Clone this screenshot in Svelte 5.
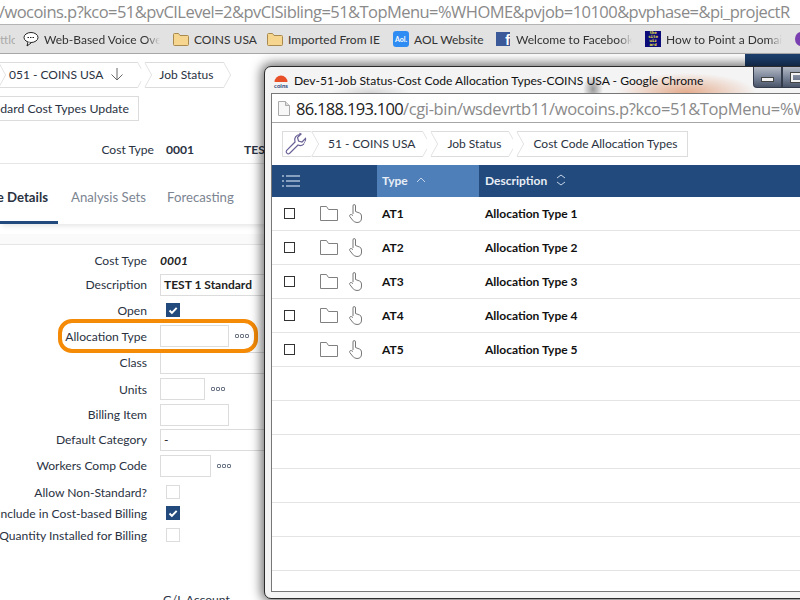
<script>
  const bookmarks = [
    { label: 'Web-Based Voice Over', icon: 'bubble', width: 116, fade: true },
    { label: 'COINS USA', icon: 'folder', width: 60 },
    { label: 'Imported From IE', icon: 'folder', width: 92 },
    { label: 'AOL Website', icon: 'aol', width: 68 },
    { label: 'Welcome to Facebook', icon: 'fb', width: 116, fade: true },
    { label: 'How to Point a Domain', icon: 'wiz', width: 116, fade: true },
  ]
  const rows = [1, 2, 3, 4, 5]
  const emptyRows = [1, 2, 3, 4, 5, 6]
</script>

{#snippet dots()}
  <span class="dots"><i></i><i></i><i></i></span>
{/snippet}

{#snippet check()}
  <span class="check">
    <svg width="14" height="14" viewBox="0 0 14 14"><path d="M3.5 7.5l2.4 2.4 4.8-5" fill="none" stroke="#fff" stroke-width="2"/></svg>
  </span>
{/snippet}

<div class="screen">
  <div class="urlbar">/wocoins.p?kco=51&amp;pvCILevel=2&amp;pvCISibling=51&amp;TopMenu=%WHOME&amp;pvjob=10100&amp;pvphase=&amp;pi_projectR</div>

  <div class="bookmarks">
    <span class="bm-cut">ttlc</span>
    {#each bookmarks as b}
      <div class="bm">
        {#if b.icon === 'bubble'}
          <svg width="16" height="16" viewBox="0 0 16 16"><ellipse cx="8" cy="6.5" rx="7" ry="5" fill="#fff" stroke="#222"/><path d="M5 11l-1 4 4-3" fill="#fff" stroke="#222"/><path d="M4.5 6.5h7" stroke="#222" stroke-dasharray="1.5 1"/></svg>
        {:else if b.icon === 'folder'}
          <svg width="16" height="16" viewBox="0 0 16 16"><path d="M.5 3.5q0-1 1-1h4l1.5 2h7.500q1 0 1 1v8q0 1-1 1h-13q-1 0-1-1z" fill="#f6d68e" stroke="#a98a4e"/></svg>
        {:else if b.icon === 'aol'}
          <span class="aol">Aol.</span>
        {:else if b.icon === 'fb'}
          <span class="fb">f</span>
        {:else}
          <span class="wiz">the site wiz ard</span>
        {/if}
        <span class="bm-label" class:fade={b.fade} style="width: {b.width}px">{b.label}</span>
      </div>
    {/each}
    <span class="bm-purple"></span>
  </div>

  <main class="page">
    <div class="page-top">
      <nav class="crumbs">
        <div class="crumb first">051 - COINS USA
          <svg class="down" width="14" height="14" viewBox="0 0 14 14"><path d="M7 1v12M1.500 7.500L7 13l5.500-5.500" fill="none" stroke="#666"/></svg>
        </div>
        <div class="crumb second">Job Status</div>
      </nav>
      <div class="navy"></div>
    </div>

    <div class="toolbar"><button class="update"><span>Standard Cost Types Update</span></button></div>

    <div class="summary">
      <span class="s-label">Cost Type</span>
      <b class="s-code">0001</b>
      <b class="s-name">TEST 1 Standard</b>
    </div>

    <div class="tabs">
      <div class="tab active"><span>Cost Type Details</span></div>
      <div class="tab">Analysis Sets</div>
      <div class="tab">Forecasting</div>
    </div>
    <div class="band"></div>

    <div class="form">
      <label>Cost Type</label><div class="value"><em>0001</em></div>
      <label>Description</label><div class="value"><span class="input wide bold">TEST 1 Standard</span></div>
      <label>Open</label><div class="value">{@render check()}</div>
      <label>Allocation Type</label><div class="value"><span class="input w69"></span>{@render dots()}</div>
      <label>Class</label><div class="value"><span class="input wide"></span></div>
      <label>Units</label><div class="value"><span class="input w45"></span>{@render dots()}</div>
      <label>Billing Item</label><div class="value"><span class="input w69"></span></div>
      <label>Default Category</label><div class="value"><span class="input wide">-</span></div>
      <label>Workers Comp Code</label><div class="value"><span class="input w51"></span>{@render dots()}</div>
      <label>Allow Non-Standard?</label><div class="value"><span class="box"></span></div>
      <label>Include in Cost-based Billing</label><div class="value">{@render check()}</div>
      <label>Quantity Installed for Billing</label><div class="value"><span class="box"></span></div>
    </div>
    <div class="gl">G/L Account</div>
  </main>

  <div class="callout"></div>

  <section class="popup">
    <div class="titlebar">
      <svg class="coins" width="18" height="18" viewBox="0 0 18 18">
        <path d="M2.500 11a6.500 6.500 0 0 1 13 0z" fill="#e8502a"/>
        <text x="9" y="16.500" font-size="6" font-weight="700" fill="#1f3f77" text-anchor="middle" font-family="Lato">coins</text>
      </svg>
      <span class="wintitle">Dev-51-Job Status-Cost Code Allocation Types-COINS USA - Google Chrome</span>
      <div class="winbtns">
        <div class="winbtn"><i class="min"></i></div>
        <div class="winbtn"><i class="max"></i></div>
      </div>
    </div>
    <div class="popup-inner">
      <div class="popup-url">
        <svg width="12" height="15" viewBox="0 0 12 15"><path d="M.5.500h7l4 4v10H.5z" fill="#f7f7f7" stroke="#aaa"/><path d="M7.500.500v4h4" fill="#ddd" stroke="#aaa"/></svg>
        <span class="host">86.188.193.100</span><span class="path">/cgi-bin/wsdevrtb11/wocoins.p?kco=51&amp;TopMenu=%WHOME</span>
      </div>
      <div class="popup-crumbs">
        <div class="crumb tool">
          <svg width="24" height="24" viewBox="0 0 24 24"><path d="M16 2.500a5.500 5.500 0 0 0-5 7.500L2.500 18.500a2.200 2.200 0 0 0 3 3L14 13a5.500 5.500 0 0 0 7.500-6.500l-3.500 3.500-3.500-1-1-3.500 3.500-3.500a5 5 0 0 0-1-.5z" fill="none" stroke="#6a6196" stroke-width="1.200"/></svg>
        </div>
        <div class="crumb coins-crumb">51 - COINS USA</div>
        <div class="crumb">Job Status</div>
        <div class="crumb last">Cost Code Allocation Types</div>
      </div>
      <div class="thead">
        <div class="c-menu">
          <svg width="18" height="12" viewBox="0 0 18 12"><path d="M4 1h14M4 6h14M4 11h14M0 1h2M0 6h2M0 11h2" stroke="#a9bdd6" stroke-width="1.300"/></svg>
        </div>
        <div class="c-type">Type
          <svg width="10" height="6" viewBox="0 0 10 6"><path d="M1 5l4-4 4 4" fill="none" stroke="#c6d6ea"/></svg>
        </div>
        <div class="c-desc">Description
          <svg width="10" height="12" viewBox="0 0 10 12"><path d="M1 4l4-3 4 3M1 8l4 3 4-3" fill="none" stroke="#c6d6ea"/></svg>
        </div>
      </div>
      {#each rows as n}
        <div class="trow">
          <span class="tick"></span>
          <svg class="ico-folder" width="18" height="15" viewBox="0 0 18 15"><path d="M.5 14.500V.5h6l2 3h9v11z" fill="#fff" stroke="#808080"/></svg>
          <svg class="ico-hand" width="13" height="19" viewBox="0 0 13 19"><path d="M4 10V2q0-1.500 1.200-1.500T6.500 2v5.500l4 1.500q2 .8 2 3v2q0 4.500-4.500 4.500-3 0-4.500-2.500L.8 12.500q-.6-1.200.4-1.800T4 11.500" fill="none" stroke="#777"/></svg>
          <b class="t-code">AT{n}</b>
          <b class="t-desc">Allocation Type {n}</b>
        </div>
      {/each}
      {#each emptyRows as n}
        <div class="trow" data-empty={n}></div>
      {/each}
    </div>
  </section>
</div>

<style>
  :global(body) {
    margin: 0;
  }
  .screen {
    position: relative;
    width: 800px;
    height: 600px;
    overflow: hidden;
    background: #fff;
    font-family: Lato, sans-serif;
    color: #2a3242;
  }
  .urlbar {
    box-sizing: border-box;
    height: 25px;
    border-bottom: 1px solid #b4b4b4;
    margin-left: -1px;
    font: 16.5px/23px 'Open Sans', sans-serif;
    letter-spacing: -0.55px;
    color: #8a8a8a;
    white-space: nowrap;
    background: #fff;
  }
  .bookmarks {
    box-sizing: border-box;
    display: flex;
    align-items: center;
    height: 29px;
    background: #e2e2e2;
    border-bottom: 1px solid #a8a8a8;
    font: 12px Lato, sans-serif;
    color: #333;
    white-space: nowrap;
  }
  .bm-cut {
    overflow: hidden;
    flex: none;
    color: #aaa;
    margin-left: -8px;
    padding-left: 8px;
    width: 15px;
    margin-right: 8px;
  }
  .bm {
    display: flex;
    align-items: center;
    gap: 5px;
    margin-right: 13px;
    flex: none;
  }
  .bm-label {
    display: block;
  }
  .bm-label.fade {
    overflow: hidden;
    -webkit-mask-image: linear-gradient(90deg, #000 88%, transparent);
    mask-image: linear-gradient(90deg, #000 88%, transparent);
  }
  .aol {
    width: 16px;
    height: 16px;
    border-radius: 3px;
    background: #2f8cf2;
    color: #fff;
    font: 700 7px/16px Lato, sans-serif;
    text-align: center;
  }
  .fb {
    width: 14px;
    height: 14px;
    margin: 0 1px;
    background: #3b5998;
    color: #fff;
    font: 700 14px/16px 'Liberation Sans', sans-serif;
    text-align: right;
    overflow: hidden;
  }
  .wiz {
    width: 16px;
    height: 16px;
    background: #0b0b7a;
    color: #f4e842;
    font: 700 4px/4px 'DejaVu Sans Mono', monospace;
    white-space: normal;
    overflow: hidden;
    text-align: center;
  }
  .bm-purple {
    width: 12px;
    height: 14px;
    border-radius: 50%;
    background: #7a3fb0;
    flex: none;
  }

  .page {
    font-size: 12.1px;
  }
  .page-top {
    display: flex;
    height: 35px;
  }
  .crumbs {
    display: flex;
    gap: 7px;
    padding-top: 8px;
    height: 26px;
    margin-left: -1px;
  }
  .navy {
    margin-left: auto;
    width: 55px;
    height: 12px;
    background: #1d3f6e;
  }
  .crumb {
    position: relative;
    box-sizing: border-box;
    display: flex;
    align-items: center;
    gap: 7px;
    height: 26px;
    padding: 0 8px 2px 16px;
    border-top: 1px solid #dcdcdc;
    border-bottom: 1px solid #dcdcdc;
    background: #fff;
    white-space: nowrap;
    font-size: 12px;
  }
  .crumb::before,
  .crumb::after {
    content: '';
    position: absolute;
    top: 3px;
    width: 17px;
    height: 17px;
    border-top: 1px solid #dcdcdc;
    border-right: 1px solid #dcdcdc;
    transform: scaleX(0.55) rotate(45deg);
    background: #fff;
  }
  .crumb::before {
    left: -9px;
  }
  .crumb::after {
    right: -9px;
  }
  .crumb.first {
    padding: 0 14px 2px 10px;
  }
  .crumb.second {
    padding: 0 11px 2px 14px;
  }
  .toolbar {
    height: 25px;
    margin-top: 7px;
  }
  .update {
    display: flex;
    justify-content: flex-end;
    box-sizing: border-box;
    width: 139px;
    height: 25px;
    padding: 0 9px 0 0;
    overflow: hidden;
    border: 1px solid #dcdcdc;
    border-left: 0;
    background: #fff;
    font: 12.3px/23px Lato, sans-serif;
    color: #2a3242;
    white-space: nowrap;
  }
  .update span {
    flex: none;
  }
  .summary {
    display: flex;
    align-items: center;
    box-sizing: border-box;
    height: 43px;
    padding-top: 15px;
    border-bottom: 1px solid #e6e6e6;
    white-space: nowrap;
  }
  .s-label {
    width: 154px;
    text-align: right;
    padding-right: 12px;
  }
  .s-code {
    width: 78px;
    font-weight: 700;
  }
  .tabs {
    display: flex;
    height: 60px;
    box-shadow: 0 4px 5px -2px rgba(0, 0, 0, 0.1);
    color: #7c8592;
    font-size: 13.2px;
  }
  .tab {
    display: flex;
    align-items: center;
    margin-right: 21px;
    padding-top: 6px;
    box-sizing: border-box;
    white-space: nowrap;
  }
  .tab.active {
    justify-content: flex-end;
    width: 58px;
    margin-right: 13px;
    padding: 9px 10px 0 0;
    border-bottom: 3px solid #224a7c;
    color: #2a3242;
    font-weight: 700;
    overflow: hidden;
  }
  .tab.active span {
    flex: none;
  }
  .band {
    height: 10px;
    margin-top: 10px;
    background: #fafafa;
  }
  .form {
    display: grid;
    grid-template-columns: 147px 1fr;
    grid-template-rows: 24px 25px 26px 26px 27px 26px 25px 25px 27px 26px 16px 28px;
    column-gap: 13px;
    border-top: 1px solid #e6e6e6;
    padding-top: 3px;
  }
  label {
    justify-self: end;
    align-self: center;
    white-space: nowrap;
  }
  .value {
    display: flex;
    align-items: center;
    gap: 6px;
  }
  em {
    font-weight: 700;
    color: #222;
  }
  .input {
    box-sizing: border-box;
    flex: none;
    height: 22px;
    padding-left: 3px;
    border: 1px solid #dcdcdc;
    line-height: 20px;
    color: #222;
    background: #fff;
  }
  .wide {
    width: 200px;
  }
  .bold {
    font-weight: 700;
    font-size: 12px;
  }
  .w69 {
    width: 69px;
  }
  .w45 {
    width: 45px;
  }
  .w51 {
    width: 51px;
  }
  .dots {
    display: flex;
    gap: 1px;
  }
  .dots i {
    box-sizing: border-box;
    width: 4px;
    height: 4px;
    border: 1px solid #6d7687;
    border-radius: 1px;
  }
  .check,
  .box {
    box-sizing: border-box;
    width: 14px;
    height: 14px;
    margin-left: 6px;
  }
  .check {
    background: #224a7c;
  }
  .check svg {
    display: block;
  }
  .box {
    border: 1px solid #dcdcdc;
  }
  .gl {
    margin: 43px 0 0 163px;
  }

  .callout {
    position: absolute;
    left: 58px;
    top: 319px;
    box-sizing: border-box;
    width: 200px;
    height: 34px;
    border: 4px solid #f58a07;
    border-radius: 14px;
  }

  .popup {
    position: absolute;
    left: 264px;
    top: 66px;
    box-sizing: border-box;
    width: 600px;
    height: 533px;
    border: 1px solid #2b2b2b;
    border-radius: 7px 0 0 7px;
    background: #f4f4f4;
    box-shadow: 0 0 11px 3px rgba(0, 0, 0, 0.55);
    padding: 0 0 6px 6px;
    display: flex;
    flex-direction: column;
  }
  .titlebar {
    display: flex;
    align-items: flex-start;
    height: 26px;
    flex: none;
    font: 12.1px Lato, sans-serif;
    color: #111;
    white-space: nowrap;
    background:
      radial-gradient(ellipse 70px 20px at 415px 26px, #e4ab8c, transparent),
      radial-gradient(ellipse 10px 14px at 322px 22px, #999, transparent),
      radial-gradient(ellipse 40px 8px at 100px 26px, #d4d4d4, transparent);
  }
  .coins {
    margin: 4px 4px 0 1px;
    flex: none;
  }
  .wintitle {
    margin-top: 5px;
    line-height: 18px;
  }
  .winbtns {
    position: absolute;
    left: 488px;
    top: 0;
    display: flex;
    height: 21px;
  }
  .winbtn {
    box-sizing: border-box;
    display: flex;
    align-items: center;
    justify-content: center;
    width: 29px;
    height: 21px;
    background: linear-gradient(#b4bac4, #7d879b 50%, #4a5469);
    border: 1px solid #333a4a;
    border-top: 0;
  }
  .winbtn:first-child {
    border-radius: 0 0 0 4px;
  }
  .min {
    width: 11px;
    height: 3px;
    background: #f2f2f2;
    border: 1px solid #444;
    margin-top: 5px;
  }
  .max {
    box-sizing: border-box;
    width: 12px;
    height: 9px;
    border: 2px solid #f2f2f2;
    outline: 1px solid #444;
  }
  .popup-inner {
    flex: 1;
    min-height: 0;
    overflow: hidden;
    border: 1px solid #777;
    background: #fff;
    font-size: 12px;
  }
  .popup-url {
    box-sizing: border-box;
    display: flex;
    align-items: center;
    height: 29px;
    padding-left: 6px;
    border-bottom: 1px solid #a6a6a6;
    font: 16.5px 'Open Sans', sans-serif;
    letter-spacing: -0.35px;
    white-space: nowrap;
  }
  .popup-url svg {
    margin-right: 6px;
    flex: none;
  }
  .host {
    color: #222;
    letter-spacing: -0.7px;
  }
  .path {
    color: #8a8a8a;
  }
  .popup-crumbs {
    display: flex;
    gap: 7px;
    padding: 8px 0 8px 10px;
    height: 26px;
    overflow: hidden;
  }
  .crumb.tool {
    padding: 0 0 0 1px;
    width: 29px;
    border-left: 1px solid #dcdcdc;
    margin-right: 1px;
  }
  .crumb.tool::before {
    display: none;
  }
  .coins-crumb {
    margin-left: -7px;
    margin-right: 1px;
  }
  .crumb.last {
    margin-left: 1px;
    padding-right: 10px;
    border-right: 1px solid #dcdcdc;
  }
  .crumb.last::after {
    display: none;
  }
  .thead {
    display: flex;
    height: 32px;
    background: #224a7c;
    color: #e8eef6;
    font-weight: 700;
  }
  .c-menu {
    display: flex;
    align-items: center;
    width: 105px;
    padding-left: 10px;
    box-sizing: border-box;
  }
  .c-type {
    display: flex;
    align-items: center;
    gap: 8px;
    box-sizing: border-box;
    width: 102px;
    padding: 0 0 2px 5px;
    background: #4f7fb8;
  }
  .c-desc {
    display: flex;
    align-items: center;
    gap: 9px;
    padding: 0 0 2px 6px;
  }
  .trow {
    box-sizing: border-box;
    display: flex;
    align-items: center;
    height: 34px;
    border-bottom: 1px solid #e4e4e4;
    color: #111;
  }
  .tick {
    box-sizing: border-box;
    width: 11px;
    height: 11px;
    margin: 0 25px 0 12px;
    border: 1px solid #333;
    flex: none;
  }
  .ico-folder {
    flex: none;
    margin-right: 11px;
  }
  .ico-hand {
    flex: none;
    margin-right: 20px;
  }
  .t-code {
    width: 103px;
    flex: none;
  }
</style>
